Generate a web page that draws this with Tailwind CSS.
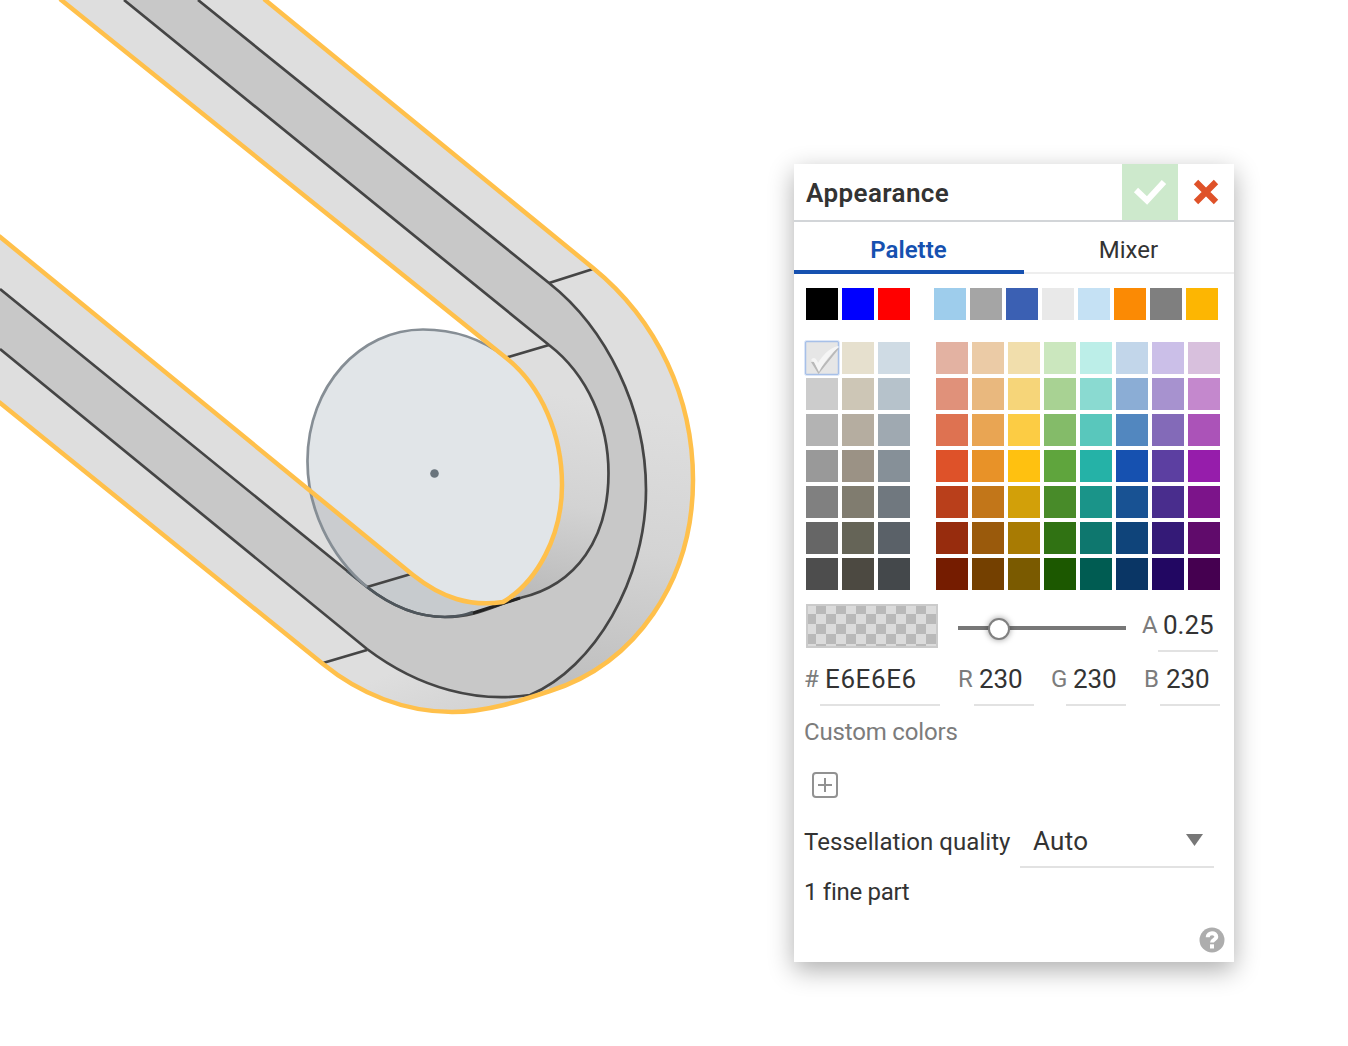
<!DOCTYPE html>
<html lang="en">
<head>
<meta charset="utf-8">
<title>Appearance</title>
<script src="https://cdn.jsdelivr.net/npm/@tailwindcss/browser@4"></script>
</head>
<body class="relative h-[1046px] w-[1348px] overflow-hidden bg-white font-[Roboto,sans-serif] text-[24px] text-[#333]">
<svg class="block" width="1348" height="1046" viewBox="0 0 1348 1046" fill="none">
  <defs>
    <linearGradient id="outer" gradientUnits="userSpaceOnUse" x1="650" y1="410" x2="605" y2="690">
      <stop offset="0" stop-color="#dedede"/><stop offset=".5" stop-color="#d4d4d4"/><stop offset="1" stop-color="#bfbfbf"/>
    </linearGradient>
    <linearGradient id="inner" gradientUnits="userSpaceOnUse" x1="590" y1="400" x2="550" y2="610">
      <stop offset="0" stop-color="#dedede"/><stop offset=".5" stop-color="#d3d3d3"/><stop offset="1" stop-color="#b8b8b8"/>
    </linearGradient>
    <linearGradient id="low" gradientUnits="userSpaceOnUse" x1="420" y1="660" x2="450" y2="730">
      <stop offset="0" stop-color="#dedede"/><stop offset="1" stop-color="#d2d2d2"/>
    </linearGradient>
  </defs>
  <!-- outer walls of the belt -->
  <path fill="#dedede" d="M60 0H264L593 268L549 283L549 345L505 357Z"/>
  <path fill="url(#outer)" d="M549 283L593 268C658 321 693 398 693 480C693 582 635 664 550 691L530 695L500 600Z"/>
  <path fill="#dedede" d="M0 237L413 575L367 649L323 664L0 402Z"/>
  <path fill="url(#low)" d="M323 664C360 694 405 713 452 713C487 713 520 701 550 691L540 640L367 649Z"/>
  <path fill="url(#inner)" d="M505 357L549 345L640 400L620 590L503 602Z"/>
  <!-- disc -->
  <path fill="#e1e5e8" d="M310 488C308 478 307 470 307 460C307 386 360 329 423 329C455 329 483 340 505 357C542 386 562 435 562 485C562 536 537 582 503 602C470 607 442 598 413 575Z"/>
  <path fill="#cacccf" d="M310 488L413 575L367 587C336 562 315 525 310 488Z"/>
  <path fill="#c7cbce" d="M367 587L413 575C442 598 470 607 503 602L520 598C492 606 477 617 445 617C415 617 390 605 367 587Z"/>
  <!-- front face -->
  <path fill="#c8c8c8" d="M124 0H198L549 283C606 328 646 408 646 490C646 580 594 668 530 695C478 703 420 689 367 649L0 349V289L367 587C390 605 415 617 445 617C477 617 492 606 520 598C577 585 609 538 609 475C609 424 588 375 549 345Z"/>
  <g stroke="#454545" stroke-width="2.700">
    <path d="M124 0L549 345C588 375 608.500 424 608.500 473C608.500 538 577 585 520 598C492 606 477 617 445 617C415 617 390 605 367 587L0 289"/>
    <path d="M198 0L549 283C606 328 646 408 646 490C646 580 594 668 530 695C478 703 420 689 367 649L0 349"/>
    <path d="M549 283L593 269M505 358L549 345M367 587L411 574M323 663L367 650"/>
  </g>
  <path stroke="#4e565c" stroke-width="2.700" d="M473 612C463 616 455 617 445 617C415 617 390 605 367 587L347 571"/>
  <path stroke="#868e95" stroke-width="2.700" d="M367 587C330 556 307 508 307.500 460C308 386 360 329.500 423 329.500C455 329.500 483 340 505 357"/>
  <path stroke="#222" stroke-width="3" d="M473 613L520 598"/>
  <circle cx="434.500" cy="473.500" r="4.300" fill="#69747c"/>
  <!-- selection outline -->
  <g stroke="#ffc04b" stroke-width="4.500" stroke-linejoin="round">
    <path d="M264 -1L593 268C658 321 693 398 693 480C693 582 635 664 550 691C520 701 487 712 452 712C405 712 360 694 323 664L-1 402"/>
    <path d="M60 -1L505 357C542 386 562 435 562 485C562 536 537 582 503 602C470 607 442 598 413 575L-1 236"/>
  </g>
</svg>

<section class="absolute left-[794px] top-[164px] flex h-[798px] w-[440px] flex-col bg-white shadow-[0_8px_24px_rgba(0,0,0,0.32)]">
  <header class="flex h-[58px] shrink-0 border-b-2 border-[#d2d5d8]">
    <h1 class="flex-1 pl-3 pt-px text-[26px] leading-[56px] font-semibold tracking-[0.4px]">Appearance</h1>
    <div class="flex size-14 items-center justify-center bg-[#cde9cc]">
      <svg width="34" height="26" viewBox="0 0 34 26" fill="none" stroke="#fff" stroke-width="6"><path d="M3 11L14 21.500L31 3"/></svg>
    </div>
    <div class="flex size-14 items-center justify-center">
      <svg width="26" height="26" viewBox="0 0 26 26" fill="none" stroke="#df5229" stroke-width="6.200"><path d="M3 3L23 23M23 3L3 23"/></svg>
    </div>
  </header>
  <nav class="flex h-[52px] shrink-0 text-center leading-[48px]">
    <div class="w-[230px] border-b-4 border-[#1651b0] pt-[4px] pr-px font-semibold text-[#1651b0]">Palette</div>
    <div class="flex-1 border-b-2 border-[#eee] pt-[4px] pr-px">Mixer</div>
  </nav>
  <div class="mt-[14px] flex shrink-0 pl-3">
    <div class="flex gap-1" data-colors="000000 0000ff ff0000"></div>
    <div class="ml-6 flex gap-1" data-colors="9ecdec a5a5a5 3b60b3 e9e9e9 c5e1f4 fb8a04 7f7f7f fdb602"></div>
  </div>
  <div class="mt-[22px] flex shrink-0 pl-3">
    <div class="relative grid grid-cols-3 gap-1" data-colors="e6e6e6 e6e0ce cfdbe4 cccccc cdc6b6 b6c2cb b3b3b3 b5ada0 9fa9b1 999999 9b9285 869098 808080 807c6f 70787f 666666 656457 5a6168 4d4d4d 4c4941 44484b">
      <svg class="absolute -left-1 -top-1 z-10" width="40" height="40" viewBox="0 0 40 40" fill="none"><rect x="3.500" y="3.500" width="33" height="33" rx="1" stroke="#a7c0e8" stroke-width="1.500"/><rect x="2.500" y="2.500" width="35" height="35" rx="2" stroke="#dce6f7"/><path fill="#b9b9b9" d="M9 24L16.500 36L37 10.500L35 10L17 32L12 24Z"/><path fill="#f5f5f5" d="M9 22C11 19 14 19 16 25C21 17 27 10 36 8L37 9C29 15 22 24 17 34L12 24Z"/></svg>
    </div>
    <div class="ml-[26px] grid grid-cols-8 gap-1" data-colors="e3b2a2 ebcba6 f1deac cbe7be bceee8 c2d6ea cbbfe8 d8c0dd e0917a e9b87e f6d579 a8d293 8adad1 8badd5 a792cf c488cd de7251 e9a553 fccc44 84bb69 59c7bc 5287bf 836ab8 ab53b8 de5229 e89228 ffc110 5fa53d 25b2a7 1651b0 5c3fa1 961dab b93f1b c27619 d2a009 488b29 1a9489 185293 492d8d 7c148a 972c0d 9a5a0c a87b03 307213 0e776e 0f447a 341a77 600b6b 751c00 744000 7a5a00 1c5800 005c52 0a3665 220762 450050"></div>
  </div>
  <div class="mt-[14px] flex h-[48px] shrink-0 pl-3">
    <div class="h-11 w-[132px] border-2 border-[#cbcbcb] bg-[repeating-conic-gradient(#b9b9b9_0_25%,#dcdcdc_0_50%)] bg-[length:20px_20px] bg-[position:-2px_-2px]"></div>
    <div class="relative ml-5 mt-[22px] h-1 w-[168px] bg-[#777]"><div class="absolute left-[30px] -top-[8px] size-[22px] rounded-full border-2 border-[#808080] bg-white shadow-[0_0_6px_rgba(0,0,0,0.4)]"></div></div>
    <div class="ml-4 w-4 leading-[42px] text-[#7c7c7c]">A</div>
    <div class="h-[48px] w-[60px] border-b-2 border-[#e2e2e2] pl-[5px] text-[26px] leading-[42px]">0.25</div>
  </div>
  <div class="flex h-[54px] shrink-0 pl-[10px] leading-[55px]">
    <div class="w-4 text-[#7c7c7c]">#</div>
    <div class="h-[54px] w-[120px] border-b-2 border-[#e2e2e2] pl-[5px] text-[26px] tracking-[0.6px]">E6E6E6</div>
    <div class="ml-[18px] w-4 text-[#7c7c7c]">R</div>
    <div class="w-[60px] border-b-2 border-[#e2e2e2] pl-[5px] text-[26px] tracking-[-0.1px]">230</div>
    <div class="ml-[17px] w-[15px] text-[#7c7c7c]">G</div>
    <div class="w-[60px] border-b-2 border-[#e2e2e2] pl-[7px] text-[26px] tracking-[-0.1px]">230</div>
    <div class="ml-[18px] w-4 text-[#7c7c7c]">B</div>
    <div class="w-[60px] border-b-2 border-[#e2e2e2] pl-[6px] text-[26px] tracking-[-0.1px]">230</div>
  </div>
  <div class="h-[66px] shrink-0 pl-[10px] leading-[52px] tracking-[-0.17px] text-[#7c7c7c]">Custom colors</div>
  <svg class="ml-[18px] shrink-0" width="26" height="26" viewBox="0 0 26 26" fill="none" stroke="#929292" stroke-width="2"><rect x="1" y="1" width="24" height="24" rx="3"/><path d="M13 6V20M6 13H20"/></svg>
  <div class="mt-[20px] flex h-[50px] shrink-0 pl-[10px]">
    <div class="w-[216px] leading-[48px] tracking-[0.05px]">Tessellation quality</div>
    <div class="flex w-[194px] justify-between border-b-2 border-[#e2e2e2] pl-[13px] pr-[10px] text-[26px] leading-[46px] tracking-[0.3px]">Auto
      <svg class="mt-4" width="18" height="12" viewBox="0 0 18 12"><path fill="#777" d="M0 0H17L8.500 12Z"/></svg>
    </div>
  </div>
  <div class="pl-[10px] leading-[48px] tracking-[-0.3px]">1 fine part</div>
  <svg class="ml-[405px] mt-[11px] shrink-0" width="26" height="26" viewBox="0 0 26 26"><circle cx="13" cy="13" r="12.500" fill="#adadad"/><path d="M8.700 10.300C8.700 5 17.300 5 17.300 10C17.300 12.800 13 12.500 13 15.500" fill="none" stroke="#fff" stroke-width="4"/><path fill="#fff" d="M11 17.300H15V21.500H11Z"/></svg>
</section>
<script>
  document.querySelectorAll('[data-colors]').forEach(group => {
    group.dataset.colors.split(' ').forEach(hex => {
      const swatch = document.createElement('div');
      swatch.className = 'size-8';
      swatch.style.backgroundColor = '#' + hex;
      group.append(swatch);
    });
  });
</script>
</body>
</html>
